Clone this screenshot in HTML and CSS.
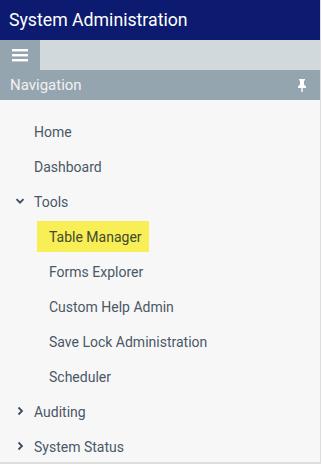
FILE: index.html
```html
<!DOCTYPE html>
<html>

<head>
    <title>System Administration</title>
    <link rel="stylesheet" href="styles.css">
</head>

<body>
    <div class="panel">
        <div class="title">System Administration</div>
        <div class="toolbar">
            <div class="menu-btn">
                <svg width="16" height="14" viewBox="0 0 16 14">
                    <rect x="0" y="1" width="16" height="2.4" fill="#fff"/>
                    <rect x="0" y="6" width="16" height="2.4" fill="#fff"/>
                    <rect x="0" y="11" width="16" height="2.4" fill="#fff"/>
                </svg>
            </div>
        </div>
        <div class="nav-head">
            <span>Navigation</span>
            <svg class="pin" width="10" height="13" viewBox="0 0 10 13">
                <path d="M2 0h6v1.5H7v4l2 2V9H5.7v4H4.3V9H1V7.5l2-2v-4H2z" fill="#fff"/>
            </svg>
        </div>
        <ul class="nav">
            <li><span class="item">Home</span></li>
            <li><span class="item">Dashboard</span></li>
            <li>
                <span class="item">
                    <svg class="chev" width="10" height="10" viewBox="0 0 10 10">
                        <path d="M1.5 3.2l3.5 3.5 3.5-3.5" fill="none" stroke="#3d4c5c" stroke-width="1.8"/>
                    </svg>Tools</span>
                <ul class="sub">
                    <li><span class="item selected">Table Manager</span></li>
                    <li><span class="item">Forms Explorer</span></li>
                    <li><span class="item">Custom Help Admin</span></li>
                    <li><span class="item">Save Lock Administration</span></li>
                    <li><span class="item">Scheduler</span></li>
                </ul>
            </li>
            <li>
                <span class="item">
                    <svg class="chev" width="10" height="10" viewBox="0 0 10 10">
                        <path d="M3.5 1.5l3.5 3.5-3.5 3.5" fill="none" stroke="#3d4c5c" stroke-width="1.8"/>
                    </svg>Auditing</span>
            </li>
            <li>
                <span class="item">
                    <svg class="chev" width="10" height="10" viewBox="0 0 10 10">
                        <path d="M3.5 1.5l3.5 3.5-3.5 3.5" fill="none" stroke="#3d4c5c" stroke-width="1.8"/>
                    </svg>System Status</span>
            </li>
        </ul>
    </div>
</body>

</html>
```

FILE: styles.css
```css
body {
    margin: 0;
    background-color: #ffffff;
    font-family: Roboto, "Liberation Sans", sans-serif;
}
.panel {
    width: 320px;
    height: 462px;
    overflow: hidden;
    background-color: #f7f7f7;
    border-right: 1px solid #dcdcdc;
    border-bottom: 2px solid #dedede;
}
.title {
    height: 40px;
    line-height: 40px;
    padding-left: 9px;
    background-color: #0c1b70;
    color: #ffffff;
    font-size: 17.7px;
}
.toolbar {
    height: 30px;
    display: flex;
    background-color: #d1d9dc;
}
.menu-btn {
    width: 40px;
    display: flex;
    align-items: center;
    justify-content: center;
    background-color: #95a5b0;
}
.nav-head {
    height: 30px;
    display: flex;
    align-items: center;
    justify-content: space-between;
    padding: 0 13px 0 10px;
    background-color: #95a5b0;
    color: #f2f2f2;
    font-size: 15px;
}
.nav, .sub {
    list-style: none;
    margin: 0;
    padding: 0;
}
.nav {
    padding-top: 14px;
}
.item {
    display: flex;
    align-items: center;
    height: 35px;
    padding-left: 34px;
    position: relative;
    color: #4a5766;
    font-size: 14px;
}
.chev {
    position: absolute;
    left: 15px;
    top: 12px;
}
.sub .item {
    padding-left: 49px;
}
.sub .item.selected {
    height: 31px;
    margin: 2px 0 2px 37px;
    padding-left: 12px;
    width: 100px;
    background-color: #f8ee56;
    color: #3f4a30;
}
```
